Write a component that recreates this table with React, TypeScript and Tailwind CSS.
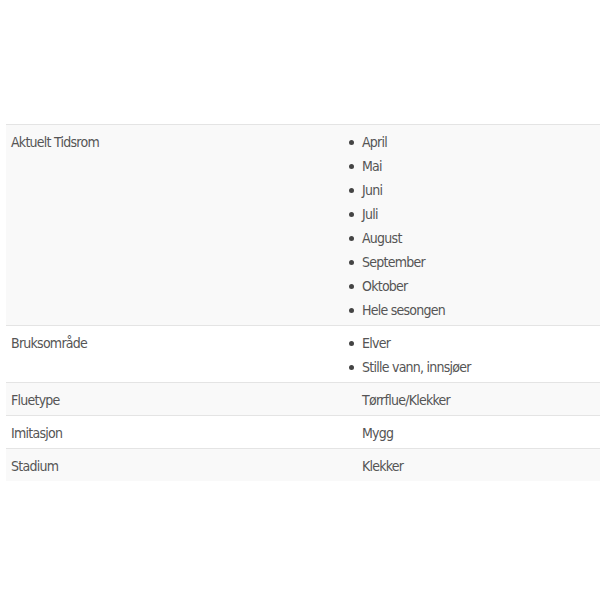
const rows: { label: string; values: string[]; list: boolean }[] = [
  {
    label: "Aktuelt Tidsrom",
    values: ["April", "Mai", "Juni", "Juli", "August", "September", "Oktober", "Hele sesongen"],
    list: true,
  },
  { label: "Bruksområde", values: ["Elver", "Stille vann, innsjøer"], list: true },
  { label: "Fluetype", values: ["Tørrflue/Klekker"], list: false },
  { label: "Imitasjon", values: ["Mygg"], list: false },
  { label: "Stadium", values: ["Klekker"], list: false },
];

export default function App() {
  return (
    <div className="min-h-[600px] w-[600px] bg-white pt-[124px] font-['DejaVu_Sans_Condensed',sans-serif] text-[14px] tracking-[-0.75px] text-[#555]">
      <div className="ml-[6px] flex flex-col">
        {rows.map((row, i) => (
          <div
            key={row.label}
            className={`flex border-t border-[#e4e4e4] pt-[5px] pb-[3px] leading-6 ${
              i % 2 === 0 ? "bg-[#f9f9f9]" : "bg-white"
            }`}
          >
            <div className="w-[356px] pl-[5px]">{row.label}</div>
            <div className="flex-1">
              {row.list ? (
                <ul>
                  {row.values.map((v) => (
                    <li key={v} className="flex items-center">
                      <span className="ml-[-13px] mr-[8px] h-[5px] w-[5px] rounded-full bg-[#444]" />
                      {v}
                    </li>
                  ))}
                </ul>
              ) : (
                <div>{row.values[0]}</div>
              )}
            </div>
          </div>
        ))}
      </div>
    </div>
  );
}
